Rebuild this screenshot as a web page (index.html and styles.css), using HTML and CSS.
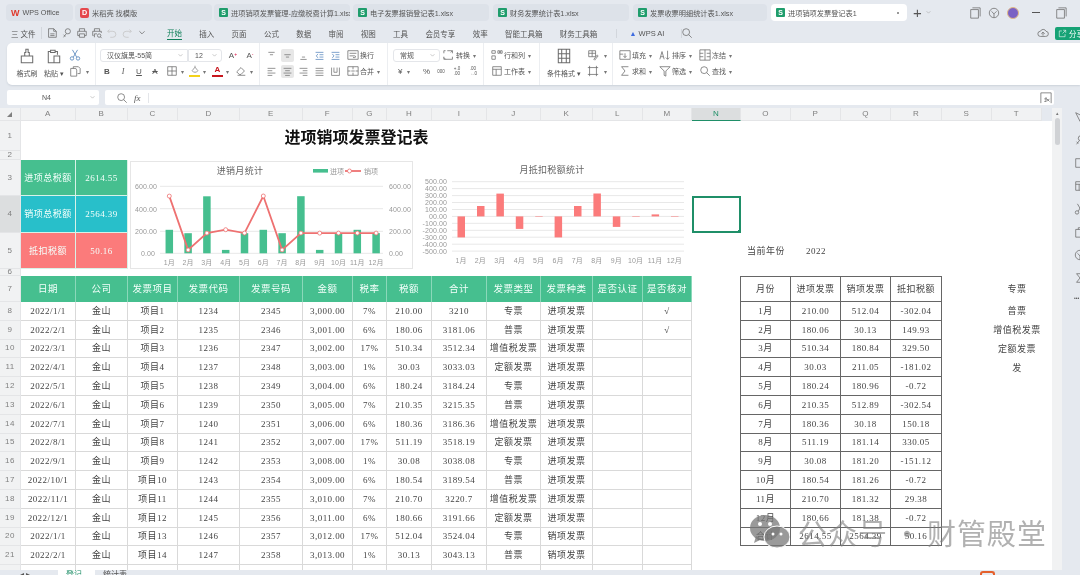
FILE: index.html
```html
<!doctype html>
<html lang="zh-CN">
    <head>
        <meta charset="UTF-8" />
        <title>进项销项发票登记表1</title>
        <link rel="stylesheet" href="styles.css">
    </head>
    <body>
        <svg class="defs" aria-hidden="true">
            <symbol id="i-doc" viewBox="0 0 14 14"><path d="M3 2h6l3 3v7H3zM9 2v3h3M5 8h5M5 10h5"/></symbol>
            <symbol id="i-key" viewBox="0 0 14 14"><circle cx="8" cy="5" r="3"/><path d="M6 8l-3 4M3 9l2 2"/></symbol>
            <symbol id="i-print" viewBox="0 0 14 14"><path d="M4 5V2h6v3M4 10H2V5h10v5h-2M4 8h6v4H4z"/></symbol>
            <symbol id="i-preview" viewBox="0 0 14 14"><path d="M4 5V2h6v3M3 10H2V5h10v2M4 12V8h3"/><circle cx="9.5" cy="10" r="2"/><path d="M11 11.500l1.500 1.500"/></symbol>
            <symbol id="i-undo" viewBox="0 0 14 14"><path d="M4 3L2 5l2 2M2 5h6a3 3 0 0 1 0 7H5"/></symbol>
            <symbol id="i-redo" viewBox="0 0 14 14"><path d="M10 3l2 2-2 2M12 5H6a3 3 0 0 0 0 7h3"/></symbol>
            <symbol id="i-caret" viewBox="0 0 14 14"><path d="M4 5l3 3 3-3"/></symbol>
            <symbol id="i-search" viewBox="0 0 14 14"><circle cx="6" cy="6" r="4"/><path d="M9 9l3.500 3.500"/></symbol>
            <symbol id="i-brush" viewBox="0 0 14 14"><path d="M2 7h10v6H2zM5 7V4h1V1h2v3h1v3"/></symbol>
            <symbol id="i-paste" viewBox="0 0 14 14"><path d="M4 3H2v10h5M10 6V3H8M4 2h4v2H4zM7 7h5v6H7z"/></symbol>
            <symbol id="i-cut" viewBox="0 0 14 14"><circle cx="3.500" cy="11" r="2"/><circle cx="10.500" cy="11" r="2"/><path d="M5 9.500L10 1M9 9.500L4 1"/></symbol>
            <symbol id="i-copy" viewBox="0 0 14 14"><path d="M5 4V2h6l2 2v6h-3M2 4h6l1 2v7H2z"/></symbol>
            <symbol id="i-border" viewBox="0 0 14 14"><path d="M2 2h10v10H2zM7 2v10M2 7h10"/></symbol>
            <symbol id="i-eraser" viewBox="0 0 14 14"><path d="M2 8l5-5 4 4-4 4H5zM3 12h9"/></symbol>
            <symbol id="i-fill" viewBox="0 0 14 14"><path d="M3 8l4-5 4 5-2 2H5zM7 3V1"/></symbol>
            <symbol id="i-top" viewBox="0 0 14 14"><path d="M3 3h8M5 6h4"/></symbol>
            <symbol id="i-mid" viewBox="0 0 14 14"><path d="M3 6h8M5 9h4"/></symbol>
            <symbol id="i-bot" viewBox="0 0 14 14"><path d="M5 9h4M3 12h8"/></symbol>
            <symbol id="i-in" viewBox="0 0 14 14"><path d="M2 3h10M7 6h5M7 9h5M2 12h10M5 5L3 7.500 5 10"/></symbol>
            <symbol id="i-out" viewBox="0 0 14 14"><path d="M2 3h10M7 6h5M7 9h5M2 12h10M3 5l2 2.500L3 10"/></symbol>
            <symbol id="i-wrap" viewBox="0 0 14 14"><path d="M1 2h12v10H1zM3 5h8M3 8h6a1 1 0 0 1 0 2H7"/></symbol>
            <symbol id="i-left" viewBox="0 0 14 14"><path d="M2 3h10M2 6h6M2 9h10M2 12h6"/></symbol>
            <symbol id="i-center" viewBox="0 0 14 14"><path d="M2 3h10M4 6h6M2 9h10M4 12h6"/></symbol>
            <symbol id="i-right" viewBox="0 0 14 14"><path d="M2 3h10M6 6h6M2 9h10M6 12h6"/></symbol>
            <symbol id="i-just" viewBox="0 0 14 14"><path d="M2 3h10M2 6h10M2 9h10M2 12h10"/></symbol>
            <symbol id="i-dist" viewBox="0 0 14 14"><path d="M2 2v10h10V2M5 2v6h4V2"/></symbol>
            <symbol id="i-merge" viewBox="0 0 14 14"><path d="M1 2h12v10H1zM1 7h3M10 7h3M5 7h4M7 2v3M7 9v3"/></symbol>
            <symbol id="i-convert" viewBox="0 0 14 14"><path d="M3 2H1v3M1 9v3h10V9M11 5V2H5M9 4l2-2M3 12l-2-2"/></symbol>
            <symbol id="i-rowcol" viewBox="0 0 14 14"><path d="M1 2h4v3H1zM1 8h4v4H1zM8 2h2v3H8zM11 2h2v3h-2z"/></symbol>
            <symbol id="i-sheet" viewBox="0 0 14 14"><path d="M2 2h10v10H2zM2 5h10M6 5v7"/></symbol>
            <symbol id="i-cond" viewBox="0 0 14 14"><path d="M2 1h10v12H2zM2 5h10M2 9h10M5 1v12M9 1v12"/></symbol>
            <symbol id="i-style" viewBox="0 0 14 14"><path d="M2 2h8v7H2zM2 5h8M6 2v7M8 12l4-5 1 1-4 5z"/></symbol>
            <symbol id="i-frame" viewBox="0 0 14 14"><path d="M3 1v12M11 1v12M1 3h12M1 11h12"/></symbol>
            <symbol id="i-filldown" viewBox="0 0 14 14"><path d="M1 2h12v10H1zM7 5v5M5 8l2 2 2-2M1 6h4"/></symbol>
            <symbol id="i-sort" viewBox="0 0 14 14"><path d="M1 12l2.500-9L6 12M2 9h3M10 2v10M8 10l2 2 2-2"/></symbol>
            <symbol id="i-freeze" viewBox="0 0 14 14"><path d="M1 1h12v12H1zM7 1v12M1 5h4M1 9h4M9 5h4M9 9h4"/></symbol>
            <symbol id="i-sum" viewBox="0 0 14 14"><path d="M11 2H3l4 5-4 5h8"/></symbol>
            <symbol id="i-filter" viewBox="0 0 14 14"><path d="M1 2h12L8 7v6l-2-1V7z"/></symbol>
            <symbol id="i-cloud" viewBox="0 0 14 14"><path d="M4 11a3 3 0 0 1 0-6 3.500 3.500 0 0 1 6.500 0 3 3 0 0 1-.5 6zM7 10V6M5 8l2-2 2 2"/></symbol>
            <symbol id="i-share" viewBox="0 0 14 14"><path d="M6 3H2v9h9V8M8 2h4v4M12 2L7 7"/></symbol>
            <symbol id="i-window" viewBox="0 0 14 14"><path d="M2 3h9v10H2zM4 1h9v10"/></symbol>
            <symbol id="i-compass" viewBox="0 0 14 14"><circle cx="7" cy="7" r="5.500"/><path d="M4 5l3 3 3-3M7 8v4"/></symbol>
            <symbol id="i-fx" viewBox="0 0 14 14"><path d="M1 13V1h12v12M5 11h2V6M5 8h3M8 8l3 3M11 8l-3 3"/></symbol>
            <symbol id="i-cursor" viewBox="0 0 14 14"><path d="M2 2l10 5-4 1-1 4z"/></symbol>
            <symbol id="i-side" viewBox="0 0 14 14"><path d="M2 2h10v10H2z"/></symbol>
        </svg>

        <div class="app">
            <div class="tabs">
                <div class="tab t-wps"><span class="wps">W</span>WPS Office</div>
                <div class="tab t-doc"><span class="pdf">D</span>米稻壳 找模版</div>
                <div class="tab t-a"><span class="s">S</span>进项销项发票管理-应缴税费计算1.xlsx</div>
                <div class="tab t-b"><span class="s">S</span>电子发票报销登记表1.xlsx</div>
                <div class="tab t-c"><span class="s">S</span>财务发票统计表1.xlsx</div>
                <div class="tab t-d"><span class="s">S</span>发票收票明细统计表1.xlsx</div>
                <div class="tab t-on"><span class="s">S</span>进项销项发票登记表1<i class="dot"></i></div>
                <div class="plus">+</div>
                <svg class="ic caret"><use href="#i-caret"/></svg>
                <div class="winbtns">
                    <svg class="ic"><use href="#i-window"/></svg>
                    <svg class="ic"><use href="#i-compass"/></svg>
                    <span class="avatar"></span>
                    <span class="min"></span>
                    <svg class="ic"><use href="#i-window"/></svg>
                </div>
            </div>

            <div class="menu">
                <div class="file">三 文件</div>
                <div class="quick">
                    <svg class="ic"><use href="#i-doc"/></svg>
                    <svg class="ic"><use href="#i-key"/></svg>
                    <svg class="ic"><use href="#i-print"/></svg>
                    <svg class="ic"><use href="#i-preview"/></svg>
                    <svg class="ic faint"><use href="#i-undo"/></svg>
                    <svg class="ic faint"><use href="#i-redo"/></svg>
                    <svg class="ic"><use href="#i-caret"/></svg>
                </div>
                <div class="items">
                    <span class="on">开始</span><span>插入</span><span>页面</span><span>公式</span><span>数据</span><span>审阅</span><span>视图</span><span>工具</span><span>会员专享</span><span>效率</span><span>智能工具箱</span><span>财务工具箱</span>
                    <span class="ai"><b>▲</b> WPS AI</span>
                    <svg class="ic"><use href="#i-search"/></svg>
                </div>
                <div class="share-box">
                    <svg class="ic"><use href="#i-cloud"/></svg>
                    <div class="share"><svg class="ic"><use href="#i-share"/></svg>分享</div>
                </div>
            </div>

            <div class="ribbon">
                <div class="grp g1">
                    <div class="big"><svg class="ic lg"><use href="#i-brush"/></svg>格式刷</div>
                    <div class="big"><svg class="ic lg"><use href="#i-paste"/></svg>粘贴 ▾</div>
                    <div class="rows">
                        <div class="row"><svg class="ic blue"><use href="#i-cut"/></svg></div>
                        <div class="row"><svg class="ic"><use href="#i-copy"/></svg><i class="tri">▾</i></div>
                    </div>
                </div>
                <div class="grp g2">
                    <div class="rows">
                        <div class="row">
                            <div class="select fontname">汉仪旗黑-55简<svg class="ic caret"><use href="#i-caret"/></svg></div>
                            <div class="select fontsize">12<svg class="ic caret"><use href="#i-caret"/></svg></div>
                            <span class="letter lg-a">A<sup>+</sup></span>
                            <span class="letter">A<sup>-</sup></span>
                        </div>
                        <div class="row tight">
                            <span class="letter bold">B</span>
                            <span class="letter ital">I</span>
                            <span class="letter under">U</span>
                            <span class="letter strike">A</span>
                            <span class="tool w21 first"><svg class="ic"><use href="#i-border"/></svg><i class="tri">▾</i></span>
                            <span class="tool w21"><span class="swatch yellow"><svg class="ic"><use href="#i-fill"/></svg></span><i class="tri">▾</i></span>
                            <span class="tool w21"><span class="swatch red">A</span><i class="tri">▾</i></span>
                            <span class="tool w21"><svg class="ic"><use href="#i-eraser"/></svg><i class="tri">▾</i></span>
                        </div>
                    </div>
                </div>
                <div class="grp g3">
                    <div class="rows">
                        <div class="row">
                            <svg class="ic sq"><use href="#i-top"/></svg>
                            <svg class="ic sq act"><use href="#i-mid"/></svg>
                            <svg class="ic sq"><use href="#i-bot"/></svg>
                            <svg class="ic sq blue"><use href="#i-in"/></svg>
                            <svg class="ic sq blue"><use href="#i-out"/></svg>
                            <span class="tool"><svg class="ic"><use href="#i-wrap"/></svg>换行</span>
                        </div>
                        <div class="row">
                            <svg class="ic sq"><use href="#i-left"/></svg>
                            <svg class="ic sq act"><use href="#i-center"/></svg>
                            <svg class="ic sq"><use href="#i-right"/></svg>
                            <svg class="ic sq"><use href="#i-just"/></svg>
                            <svg class="ic sq"><use href="#i-dist"/></svg>
                            <span class="tool"><svg class="ic"><use href="#i-merge"/></svg>合并<i class="tri">▾</i></span>
                        </div>
                    </div>
                </div>
                <div class="grp g4">
                    <div class="rows">
                        <div class="row">
                            <div class="select numfmt">常规<svg class="ic caret"><use href="#i-caret"/></svg></div>
                            <span class="tool"><svg class="ic"><use href="#i-convert"/></svg>转换<i class="tri">▾</i></span>
                        </div>
                        <div class="row num-row">
                            <span class="yen">¥ <i class="tri">▾</i></span><span class="pct">%</span><span class="tiny">000</span><span class="tiny">+.0<br>.00</span><span class="tiny">.00<br>→.0</span>
                        </div>
                    </div>
                </div>
                <div class="grp g5">
                    <div class="rows">
                        <div class="row"><span class="tool"><svg class="ic"><use href="#i-rowcol"/></svg>行和列<i class="tri">▾</i></span></div>
                        <div class="row"><span class="tool"><svg class="ic"><use href="#i-sheet"/></svg>工作表<i class="tri">▾</i></span></div>
                    </div>
                </div>
                <div class="grp g6">
                    <div class="big"><svg class="ic lg"><use href="#i-cond"/></svg>条件格式 ▾</div>
                    <div class="rows">
                        <div class="row"><svg class="ic"><use href="#i-style"/></svg><i class="tri">▾</i></div>
                        <div class="row"><svg class="ic"><use href="#i-frame"/></svg><i class="tri">▾</i></div>
                    </div>
                </div>
                <div class="grp g7">
                    <div class="rows">
                        <div class="row"><span class="tool w40"><svg class="ic"><use href="#i-filldown"/></svg>填充<i class="tri">▾</i></span><span class="tool w40"><svg class="ic"><use href="#i-sort"/></svg>排序<i class="tri">▾</i></span><span class="tool"><svg class="ic"><use href="#i-freeze"/></svg>冻结<i class="tri">▾</i></span></div>
                        <div class="row"><span class="tool w40"><svg class="ic"><use href="#i-sum"/></svg>求和<i class="tri">▾</i></span><span class="tool w40"><svg class="ic"><use href="#i-filter"/></svg>筛选<i class="tri">▾</i></span><span class="tool"><svg class="ic"><use href="#i-search"/></svg>查找<i class="tri">▾</i></span></div>
                    </div>
                </div>
            </div>

            <div class="formula">
                <div class="namebox">N4<svg class="ic caret"><use href="#i-caret"/></svg></div>
                <div class="fbar">
                    <svg class="ic"><use href="#i-search"/></svg>
                    <em>fx</em>
                    <svg class="ic endfx"><use href="#i-fx"/></svg>
                </div>
            </div>

            <div class="work">
                <div class="sheet">
                    <table class="grid">
                        <colgroup>
                            <col class="c21"><col class="c55"><col class="c52"><col class="c50"><col class="c62"><col class="c63"><col class="c50"><col class="c34"><col class="c45"><col class="c55"><col class="c54"><col class="c52"><col class="c50"><col class="c49"><col class="c49"><col class="c50"><col class="c50"><col class="c50"><col class="c51"><col class="c50"><col class="c50"><col class="c10">
                        </colgroup>
                        <tr class="letters"><th class="corner">◢</th><th>A</th><th>B</th><th>C</th><th>D</th><th>E</th><th>F</th><th>G</th><th>H</th><th>I</th><th>J</th><th>K</th><th>L</th><th>M</th><th class="cur">N</th><th>O</th><th>P</th><th>Q</th><th>R</th><th>S</th><th>T</th><th class="blank"></th></tr>
                        <tr class="r1"><th>1</th><td colspan="13" class="title">进项销项发票登记表</td><td colspan="8"></td></tr>
                        <tr class="r2"><th>2</th><td colspan="21"></td></tr>
                        <tr class="r3">
                            <th>3</th><td class="kpi green">进项总税额</td><td class="kpi green">2614.55</td>
                            <td colspan="11" rowspan="3" class="charts">
                                <div class="chart-row">
                                    <svg class="chart-a" viewBox="130 161 283 108">
                                        <rect class="frame" x="130.500" y="161.500" width="282" height="107"/>
                                        <text class="ctitle" x="240" y="174" text-anchor="middle">进销月统计</text>
                                        <rect class="bar-g" x="313" y="169" width="15" height="3.600"/>
                                        <text class="lab" x="330" y="174">进项</text>
                                        <path class="ln" d="M345 171h16"/>
                                        <circle class="pt" cx="349.500" cy="171" r="2"/>
                                        <text class="lab" x="364" y="174">销项</text>
                                        <path class="gl" d="M160 186.300h223M160 208.700h223M160 231.300h223M160 253.300h223"/>
                                        <g class="lab">
                                            <text x="135" y="189">600.00</text><text x="135" y="211.500">400.00</text><text x="135" y="234">200.00</text><text x="141" y="256">0.00</text>
                                            <text x="389" y="189">600.00</text><text x="389" y="211.500">400.00</text><text x="389" y="234">200.00</text><text x="389" y="256">0.00</text>
                                        </g>
                                        <g class="bar-g">
                                            <rect x="165.550" y="229.800" width="7.500" height="23.500"/><rect x="184.350" y="233.200" width="7.500" height="20.100"/><rect x="203.150" y="196.300" width="7.500" height="57"/><rect x="221.950" y="249.900" width="7.500" height="3.400"/><rect x="240.750" y="233.200" width="7.500" height="20.100"/><rect x="259.550" y="229.800" width="7.500" height="23.500"/><rect x="278.350" y="233.200" width="7.500" height="20.100"/><rect x="297.150" y="196.200" width="7.500" height="57.100"/><rect x="315.950" y="249.900" width="7.500" height="3.400"/><rect x="334.750" y="233.100" width="7.500" height="20.200"/><rect x="353.550" y="229.800" width="7.500" height="23.500"/><rect x="372.350" y="233.100" width="7.500" height="20.200"/>
                                        </g>
                                        <path class="ln" d="M169.300 196.100L188.100 249.900 206.900 233.100 225.700 229.700 244.500 233.100 263.300 196 282.100 249.900 300.900 233.100 319.700 233.100 338.500 233.100 357.300 233.100 376.100 233.100"/>
                                        <g class="pt">
                                            <circle cx="169.300" cy="196.100" r="2"/><circle cx="188.100" cy="249.900" r="2"/><circle cx="206.900" cy="233.100" r="2"/><circle cx="225.700" cy="229.700" r="2"/><circle cx="244.500" cy="233.100" r="2"/><circle cx="263.300" cy="196" r="2"/><circle cx="282.100" cy="249.900" r="2"/><circle cx="300.900" cy="233.100" r="2"/><circle cx="319.700" cy="233.100" r="2"/><circle cx="338.500" cy="233.100" r="2"/><circle cx="357.300" cy="233.100" r="2"/><circle cx="376.100" cy="233.100" r="2"/>
                                        </g>
                                        <g class="lab mid">
                                            <text x="169.300" y="265">1月</text><text x="188.100" y="265">2月</text><text x="206.900" y="265">3月</text><text x="225.700" y="265">4月</text><text x="244.500" y="265">5月</text><text x="263.300" y="265">6月</text><text x="282.100" y="265">7月</text><text x="300.900" y="265">8月</text><text x="319.700" y="265">9月</text><text x="338.500" y="265">10月</text><text x="357.300" y="265">11月</text><text x="376.100" y="265">12月</text>
                                        </g>
                                    </svg>
                                    <svg class="chart-b" viewBox="415 161 276 108">
                                        <text class="ctitle" x="552" y="173" text-anchor="middle">月抵扣税额统计</text>
                                        <path class="gl" d="M452 181.700h232M452 188.600h232M452 195.600h232M452 202.500h232M452 209.500h232M452 216.400h232M452 223.300h232M452 230.300h232M452 237.200h232M452 244.200h232M452 251.100h232"/>
                                        <g class="lab end">
                                            <text x="447" y="184">500.00</text><text x="447" y="191">400.00</text><text x="447" y="198">300.00</text><text x="447" y="205">200.00</text><text x="447" y="212">100.00</text><text x="447" y="219">00.00</text><text x="447" y="226">-100.00</text><text x="447" y="233">-200.00</text><text x="447" y="240">-300.00</text><text x="447" y="247">-400.00</text><text x="447" y="254">-500.00</text>
                                        </g>
                                        <g class="bar-r">
                                            <rect x="457.500" y="216.400" width="7.500" height="21"/><rect x="477" y="206" width="7.500" height="10.400"/><rect x="496.400" y="193.600" width="7.500" height="22.800"/><rect x="515.800" y="216.400" width="7.500" height="12.500"/><rect x="535.200" y="216.400" width="7.500" height="0.500"/><rect x="554.600" y="216.400" width="7.500" height="21"/><rect x="574" y="206" width="7.500" height="10.400"/><rect x="593.400" y="193.500" width="7.500" height="22.900"/><rect x="612.800" y="216.400" width="7.500" height="10.500"/><rect x="632.200" y="216.400" width="7.500" height="0.500"/><rect x="651.600" y="214.400" width="7.500" height="2"/><rect x="671" y="216.400" width="7.500" height="0.500"/>
                                        </g>
                                        <g class="lab mid">
                                            <text x="461" y="263">1月</text><text x="480.400" y="263">2月</text><text x="499.800" y="263">3月</text><text x="519.200" y="263">4月</text><text x="538.600" y="263">5月</text><text x="558" y="263">6月</text><text x="577.400" y="263">7月</text><text x="596.800" y="263">8月</text><text x="616.200" y="263">9月</text><text x="635.600" y="263">10月</text><text x="655" y="263">11月</text><text x="674.400" y="263">12月</text>
                                        </g>
                                    </svg>
                                </div>
                            </td>
                            <td colspan="8"></td>
                        </tr>
                        <tr class="r4"><th class="cur-row">4</th><td class="kpi cyan">销项总税额</td><td class="kpi cyan">2564.39</td><td class="sel"></td><td colspan="7"></td></tr>
                        <tr class="r5"><th>5</th><td class="kpi coral">抵扣税额</td><td class="kpi coral">50.16</td><td></td><td>当前年份</td><td>2022</td><td colspan="5"></td></tr>
                        <tr class="r6"><th>6</th><td colspan="21"></td></tr>
                        <tr class="head"><th>7</th><td>日期</td><td>公司</td><td>发票项目</td><td>发票代码</td><td>发票号码</td><td>金额</td><td>税率</td><td>税额</td><td>合计</td><td>发票类型</td><td>发票种类</td><td>是否认证</td><td>是否核对</td><td></td><td>月份</td><td>进项发票</td><td>销项发票</td><td>抵扣税额</td><td></td><td>专票</td><td></td></tr>
                        <tr class="data boxed"><th>8</th><td>2022/1/1</td><td>金山</td><td>项目1</td><td>1234</td><td>2345</td><td>3,000.00</td><td>7%</td><td>210.00</td><td>3210</td><td>专票</td><td>进项发票</td><td></td><td>√</td><td></td><td>1月</td><td>210.00</td><td>512.04</td><td>-302.04</td><td></td><td>普票</td><td></td></tr>
                        <tr class="data boxed"><th>9</th><td>2022/2/1</td><td>金山</td><td>项目2</td><td>1235</td><td>2346</td><td>3,001.00</td><td>6%</td><td>180.06</td><td>3181.06</td><td>普票</td><td>进项发票</td><td></td><td>√</td><td></td><td>2月</td><td>180.06</td><td>30.13</td><td>149.93</td><td></td><td>增值税发票</td><td></td></tr>
                        <tr class="data boxed"><th>10</th><td>2022/3/1</td><td>金山</td><td>项目3</td><td>1236</td><td>2347</td><td>3,002.00</td><td>17%</td><td>510.34</td><td>3512.34</td><td>增值税发票</td><td>进项发票</td><td></td><td></td><td></td><td>3月</td><td>510.34</td><td>180.84</td><td>329.50</td><td></td><td>定额发票</td><td></td></tr>
                        <tr class="data boxed"><th>11</th><td>2022/4/1</td><td>金山</td><td>项目4</td><td>1237</td><td>2348</td><td>3,003.00</td><td>1%</td><td>30.03</td><td>3033.03</td><td>定额发票</td><td>进项发票</td><td></td><td></td><td></td><td>4月</td><td>30.03</td><td>211.05</td><td>-181.02</td><td></td><td>发</td><td></td></tr>
                        <tr class="data boxed"><th>12</th><td>2022/5/1</td><td>金山</td><td>项目5</td><td>1238</td><td>2349</td><td>3,004.00</td><td>6%</td><td>180.24</td><td>3184.24</td><td>专票</td><td>进项发票</td><td></td><td></td><td></td><td>5月</td><td>180.24</td><td>180.96</td><td>-0.72</td><td colspan="3"></td></tr>
                        <tr class="data boxed"><th>13</th><td>2022/6/1</td><td>金山</td><td>项目6</td><td>1239</td><td>2350</td><td>3,005.00</td><td>7%</td><td>210.35</td><td>3215.35</td><td>普票</td><td>进项发票</td><td></td><td></td><td></td><td>6月</td><td>210.35</td><td>512.89</td><td>-302.54</td><td colspan="3"></td></tr>
                        <tr class="data boxed"><th>14</th><td>2022/7/1</td><td>金山</td><td>项目7</td><td>1240</td><td>2351</td><td>3,006.00</td><td>6%</td><td>180.36</td><td>3186.36</td><td>增值税发票</td><td>进项发票</td><td></td><td></td><td></td><td>7月</td><td>180.36</td><td>30.18</td><td>150.18</td><td colspan="3"></td></tr>
                        <tr class="data boxed"><th>15</th><td>2022/8/1</td><td>金山</td><td>项目8</td><td>1241</td><td>2352</td><td>3,007.00</td><td>17%</td><td>511.19</td><td>3518.19</td><td>定额发票</td><td>进项发票</td><td></td><td></td><td></td><td>8月</td><td>511.19</td><td>181.14</td><td>330.05</td><td colspan="3"></td></tr>
                        <tr class="data boxed"><th>16</th><td>2022/9/1</td><td>金山</td><td>项目9</td><td>1242</td><td>2353</td><td>3,008.00</td><td>1%</td><td>30.08</td><td>3038.08</td><td>专票</td><td>进项发票</td><td></td><td></td><td></td><td>9月</td><td>30.08</td><td>181.20</td><td>-151.12</td><td colspan="3"></td></tr>
                        <tr class="data boxed"><th>17</th><td>2022/10/1</td><td>金山</td><td>项目10</td><td>1243</td><td>2354</td><td>3,009.00</td><td>6%</td><td>180.54</td><td>3189.54</td><td>普票</td><td>进项发票</td><td></td><td></td><td></td><td>10月</td><td>180.54</td><td>181.26</td><td>-0.72</td><td colspan="3"></td></tr>
                        <tr class="data boxed"><th>18</th><td>2022/11/1</td><td>金山</td><td>项目11</td><td>1244</td><td>2355</td><td>3,010.00</td><td>7%</td><td>210.70</td><td>3220.7</td><td>增值税发票</td><td>进项发票</td><td></td><td></td><td></td><td>11月</td><td>210.70</td><td>181.32</td><td>29.38</td><td colspan="3"></td></tr>
                        <tr class="data boxed"><th>19</th><td>2022/12/1</td><td>金山</td><td>项目12</td><td>1245</td><td>2356</td><td>3,011.00</td><td>6%</td><td>180.66</td><td>3191.66</td><td>定额发票</td><td>进项发票</td><td></td><td></td><td></td><td>12月</td><td>180.66</td><td>181.38</td><td>-0.72</td><td colspan="3"></td></tr>
                        <tr class="data boxed"><th>20</th><td>2022/1/1</td><td>金山</td><td>项目13</td><td>1246</td><td>2357</td><td>3,012.00</td><td>17%</td><td>512.04</td><td>3524.04</td><td>专票</td><td>销项发票</td><td></td><td></td><td></td><td>合计</td><td>2614.55</td><td>2564.39</td><td>50.16</td><td colspan="3"></td></tr>
                        <tr class="data"><th>21</th><td>2022/2/1</td><td>金山</td><td>项目14</td><td>1247</td><td>2358</td><td>3,013.00</td><td>1%</td><td>30.13</td><td>3043.13</td><td>普票</td><td>销项发票</td><td></td><td></td><td colspan="8"></td></tr>
                        <tr class="data"><th></th><td></td><td></td><td></td><td></td><td></td><td></td><td></td><td></td><td></td><td></td><td></td><td></td><td></td><td colspan="8"></td></tr>
                    </table>

                    <div class="watermark">
                        <svg class="wechat" viewBox="0 0 40 34"><ellipse cx="15" cy="13" rx="15" ry="13"/><path d="M6 21l-2 7 8-4z"/><ellipse class="w2" cx="27" cy="22" rx="13" ry="11"/><circle class="w3" cx="10" cy="9" r="2"/><circle class="w3" cx="20" cy="9" r="2"/><circle class="w3" cx="23" cy="19" r="1.500"/><circle class="w3" cx="31" cy="19" r="1.500"/></svg>
                        <span>公众号 · 财管殿堂</span>
                    </div>
                </div>

                <div class="vscroll"><span class="arrow">▴</span><span class="thumb"></span></div>
                <div class="sidebar">
                    <svg class="ic"><use href="#i-cursor"/></svg>
                    <svg class="ic"><use href="#i-key"/></svg>
                    <svg class="ic"><use href="#i-side"/></svg>
                    <svg class="ic"><use href="#i-sheet"/></svg>
                    <svg class="ic"><use href="#i-cut"/></svg>
                    <svg class="ic"><use href="#i-copy"/></svg>
                    <svg class="ic"><use href="#i-compass"/></svg>
                    <svg class="ic"><use href="#i-sum"/></svg>
                    <span class="more">•••</span>
                </div>
            </div>

            <div class="bottom">
                <span class="sh first-sh">◂ ▸</span>
                <span class="sh on">登记表</span>
                <span class="sh">统计表</span>
                <span class="mark"></span>
            </div>
        </div>
    </body>
</html>
```
FILE: styles.css
```css
* {
    box-sizing: border-box;
}

body {
    margin: 0;
    background: #e5e9ef;
    font-family: "Liberation Sans", "Noto Sans CJK SC", sans-serif;
    font-size: 7px;
    color: #555;
}

.defs {
    display: none;
}

.app {
    width: 1080px;
    height: 575px;
    overflow: hidden;
    display: flex;
    flex-direction: column;
    background: #e5e9ef;
    filter: blur(0.35px);
}

.ic {
    width: 12px;
    height: 12px;
    flex: none;
    fill: none;
    stroke: #6c6c6c;
    stroke-width: 0.9;
    overflow: visible;
}

.ic.lg {
    width: 16px;
    height: 16px;
}

.ic.blue {
    stroke: #4a7db8;
}

.ic.faint {
    stroke: #c4c4c4;
}

.ic.caret {
    width: 9px;
    height: 9px;
    stroke: #a5a5a5;
}

.tri {
    font-style: normal;
    font-size: 6px;
    color: #777;
    margin-left: 2px;
}

/* top tab strip */
.tabs {
    height: 23px;
    display: flex;
    align-items: center;
    gap: 2px;
    padding: 2px 0 0 6px;
}

.tab {
    height: 17px;
    flex: none;
    display: flex;
    align-items: center;
    gap: 3px;
    padding-left: 5px;
    background: #dde2e9;
    border-radius: 4px;
    font-size: 7.2px;
    white-space: nowrap;
    overflow: hidden;
}

.t-wps { width: 67px; }
.t-doc { width: 137px; }
.t-a { width: 136px; }
.t-b { width: 136px; margin-left: 1px; }
.t-c { width: 136px; margin-left: 2px; }
.t-d { width: 134px; margin-left: 2px; }
.t-on { width: 136px; margin-left: 2px; background: #fff; position: relative; }

.s {
    width: 9px;
    height: 9px;
    flex: none;
    border-radius: 1px;
    background: #1f9d6c;
    color: #fff;
    font-size: 7px;
    font-weight: 700;
    line-height: 9px;
    text-align: center;
}

.wps {
    color: #e0392b;
    font-size: 9px;
    font-weight: 700;
}

.pdf {
    width: 9px;
    height: 10px;
    border-radius: 2px;
    background: #e5484d;
    color: #fff;
    font-weight: 700;
    line-height: 10px;
    text-align: center;
}

.dot {
    position: absolute;
    right: 8px;
    top: 8px;
    width: 2px;
    height: 2px;
    border-radius: 50%;
    background: #777;
}

.plus {
    font-size: 15px;
    line-height: 15px;
    margin-left: 4px;
    color: #555;
}

.winbtns {
    margin-left: 34px;
    display: flex;
    align-items: center;
    gap: 7px;
}

.avatar {
    width: 12px;
    height: 12px;
    border-radius: 50%;
    background: #7b62c4;
    border: 1px solid #e2b985;
}

.min {
    width: 8px;
    height: 1px;
    margin: 0 8px 0 6px;
    background: #555;
}

/* menu line */
.menu {
    height: 20px;
    display: flex;
    align-items: center;
    font-size: 7.5px;
}

.file {
    margin-left: 11px;
    width: 30px;
}

.quick {
    width: 126px;
    display: flex;
    gap: 3px;
    padding-left: 4px;
    border-left: 1px solid #d2d6dc;
}

.items {
    display: flex;
    align-items: center;
    gap: 17.3px;
}

.items .on {
    color: #11805a;
    border-bottom: 1px solid #11805a;
    padding-bottom: 1px;
}

.items .ic {
    margin-left: -19px;
}

.ai {
    margin-left: 1px;
    padding: 0 17px 0 13px;
    border-left: 1px solid #d2d6dc;
    border-right: 1px solid #d2d6dc;
}

.ai b {
    color: #3d6be0;
    font-size: 7px;
}

.share-box {
    margin-left: auto;
    display: flex;
    align-items: center;
    gap: 6px;
}

.share {
    width: 25px;
    height: 13px;
    display: flex;
    align-items: center;
    gap: 2px;
    padding-left: 3px;
    background: #16a275;
    color: #fff;
    border-radius: 2px 0 0 2px;
    white-space: nowrap;
    overflow: hidden;
}

.share .ic {
    stroke: #fff;
    width: 9px;
    height: 9px;
}

/* ribbon */
.ribbon {
    height: 42px;
    margin-left: 7px;
    display: flex;
    background: #fff;
    border-radius: 5px 0 0 5px;
    box-shadow: 0 1px 2px #ccd2da;
}

.grp {
    flex: none;
    display: flex;
    padding: 4px 0 6px;
    border-right: 1px solid #eceef1;
}

.g1 { width: 89px; padding-left: 8px; gap: 3px; }
.g2 { width: 164px; padding-left: 4px; }
.g3 { width: 128px; padding-left: 5px; }
.g4 { width: 96px; padding-left: 5px; }
.g5 { width: 56px; padding-left: 7px; }
.g6 { width: 73px; padding-left: 10px; gap: 9px; }
.g7 { flex: 1; border: 0; padding-left: 6px; }

.rows {
    display: flex;
    flex-direction: column;
}

.row {
    height: 16px;
    display: flex;
    align-items: center;
    gap: 3px;
}

.row.tight {
    gap: 2px;
}

.g7 .row {
    gap: 0;
}

.big {
    width: 24px;
    display: flex;
    flex-direction: column;
    align-items: center;
    justify-content: space-between;
    white-space: nowrap;
    padding: 1px 0;
}

.g6 .big {
    width: 28px;
}

.select {
    height: 13px;
    display: flex;
    align-items: center;
    justify-content: space-between;
    padding: 0 2px 0 6px;
    border: 1px solid #e4e6ea;
}

.fontname {
    width: 88px;
    border-radius: 3px 0 0 3px;
}

.fontsize {
    width: 34px;
    margin-left: -3px;
    border-radius: 0 3px 3px 0;
}

.numfmt {
    width: 47px;
    border-radius: 3px;
}

.letter {
    width: 14px;
    text-align: center;
    font-size: 8px;
}

.letter sup {
    font-size: 5px;
    color: #d14;
    vertical-align: 2px;
    line-height: 0;
}

.lg-a {
    margin-left: 1px;
}

.bold { font-weight: 700; }
.ital { font-style: italic; font-family: "Liberation Serif", serif; }
.under { text-decoration: underline; }
.strike { text-decoration: line-through; }

.tool {
    display: inline-flex;
    align-items: center;
    gap: 1px;
    white-space: nowrap;
}

.g3 .tool {
    margin-left: 2px;
}

.w21 {
    width: 21px;
}

.w40 {
    width: 40px;
}

.first {
    margin-left: 2px;
}

.swatch {
    width: 11px;
    height: 12px;
    text-align: center;
    font-weight: 700;
    font-size: 8px;
    line-height: 10px;
    border-bottom: 2px solid;
    display: block;
}

.swatch .ic {
    width: 10px;
    height: 10px;
}

.yellow { border-color: #f3d21a; }
.red { border-color: #c8161d; color: #c8161d; }

.ic.sq {
    width: 13px;
    height: 13px;
    padding: 1px;
    border-radius: 2px;
}

.ic.act {
    background: #e7e7e7;
}

.num-row {
    gap: 0;
    font-size: 8px;
    padding-left: 5px;
}

.yen {
    width: 25px;
}

.pct {
    width: 10px;
}

.tiny {
    width: 16px;
    font-size: 4.5px;
    line-height: 5px;
    text-align: center;
}

/* name box and formula line */
.formula {
    height: 15px;
    margin: 5px 26px 0 7px;
    display: flex;
    gap: 6px;
}

.namebox {
    width: 92px;
    display: flex;
    align-items: center;
    justify-content: space-between;
    padding: 0 2px 0 35px;
    background: #fff;
    border-radius: 2px;
}

.fbar {
    flex: 1;
    display: flex;
    align-items: center;
    gap: 6px;
    padding-left: 11px;
    background: #fff;
    border-radius: 2px;
}

.fbar em {
    font-family: "Liberation Serif", serif;
    font-size: 9px;
    padding-right: 7px;
    border-right: 1px solid #e4e6ea;
}

.endfx {
    margin-left: auto;
    margin-right: 2px;
}

/* sheet area */
.work {
    height: 462px;
    margin-top: 3px;
    display: flex;
}

.sheet {
    width: 1052px;
    position: relative;
    overflow: hidden;
    background: #fff;
}

.grid {
    table-layout: fixed;
    width: 1052px;
    border-collapse: separate;
    border-spacing: 0;
    font-family: "Liberation Serif", "Noto Sans CJK SC", serif;
    font-size: 9px;
    letter-spacing: 0.45px;
    color: #444;
}

.c21 { width: 21px; }
.c55 { width: 55px; }
.c52 { width: 52px; }
.c50 { width: 50px; }
.c62 { width: 62px; }
.c63 { width: 63px; }
.c34 { width: 34px; }
.c45 { width: 45px; }
.c54 { width: 54px; }
.c49 { width: 49px; }
.c51 { width: 51px; }
.c10 { width: 10px; }

.grid td,
.grid th {
    padding: 0;
    text-align: center;
    white-space: nowrap;
    overflow: hidden;
    line-height: 1;
}

.grid td {
    padding-top: 1px;
}

.grid th {
    background: #f1f2f3;
    border-right: 1px solid #e4e5e7;
    border-bottom: 1px solid #e4e5e7;
    font: 8px/1 "Liberation Sans", sans-serif;
    color: #808080;
}

.letters {
    height: 13px;
}

.letters th.cur,
.grid th.cur-row {
    background: #dcdedf;
}

.letters th.cur {
    color: #1f8f68;
    border-bottom: 1px solid #1f8f68;
}

.letters th.blank {
    background: #e5e9ef;
    border: 0;
}

.grid th.corner {
    font-size: 5px;
}

.r1 { height: 30px; }
.r2 { height: 9px; }
.r3 { height: 36px; }
.r4 { height: 37px; }
.r5 { height: 36px; }
.r6 { height: 7px; }
.head { height: 26px; }
.data { height: 18.8px; }

.grid .r6 th {
    line-height: 6px;
}

.grid .title {
    padding-top: 0;
    font: 700 16px/1 "Noto Sans CJK SC", sans-serif;
    color: #111;
    letter-spacing: 0;
}

.kpi {
    color: #f4fffb;
    border-right: 1px solid #d8f2e8;
    border-bottom: 1px solid #d8f2e8;
}

.grid .green { background: #46bf8f; }
.grid .cyan { background: #28bfca; }
.grid .coral { background: #fb7b7b; }

.grid .charts {
    padding-top: 0;
    vertical-align: top;
    overflow: visible;
}

.chart-row {
    display: flex;
    gap: 2px;
    padding: 1px 0 0 2px;
    height: 109px;
}

.chart-a {
    width: 283px;
    height: 108px;
}

.chart-b {
    width: 276px;
    height: 108px;
}

.frame {
    fill: #fff;
    stroke: #e6e6e6;
}

.ctitle {
    font: 9px "Noto Sans CJK SC", sans-serif;
    fill: #666;
    letter-spacing: 0.3px;
}

.lab {
    font: 7px "Liberation Sans", "Noto Sans CJK SC", sans-serif;
    letter-spacing: 0.1px;
    fill: #999;
}

.lab.end {
    text-anchor: end;
}

.lab.mid {
    text-anchor: middle;
}

.gl {
    stroke: #e8e8e8;
    fill: none;
    stroke-width: 1;
}

.bar-g {
    fill: #46bf8f;
}

.bar-r {
    fill: #fb7b7b;
}

.ln {
    fill: none;
    stroke: #ee7171;
    stroke-width: 1.8;
}

.pt {
    fill: #fff;
    stroke: #ee7171;
    stroke-width: 0.8;
}

.sel {
    border: 2px solid #1f8f68;
    position: relative;
}

.sel::after {
    content: "";
    position: absolute;
    right: -2px;
    bottom: -2px;
    width: 3px;
    height: 3px;
    background: #1f8f68;
}

/* main table */
.head td:nth-of-type(-n+13) {
    background: #46bf8f;
    color: #f4fffb;
    font-size: 9.5px;
    border-right: 1px solid #8bd8ba;
}

.data td:nth-of-type(-n+13) {
    border-right: 1px solid #d9d9d9;
    border-bottom: 1px solid #d9d9d9;
}

/* month table on the right */
.head td:nth-of-type(n+15):nth-of-type(-n+18),
.boxed td:nth-of-type(n+15):nth-of-type(-n+18) {
    border-right: 1px solid #666;
    border-bottom: 1px solid #666;
}

.head td:nth-of-type(n+15):nth-of-type(-n+18) {
    border-top: 1px solid #666;
}

.head td:nth-of-type(14),
.boxed td:nth-of-type(14) {
    border-right: 1px solid #666;
}

.watermark {
    position: absolute;
    left: 750px;
    top: 403px;
    display: flex;
    align-items: center;
    gap: 8px;
    color: rgba(125, 125, 125, 0.6);
    font: 29px "Noto Sans CJK SC", sans-serif;
    letter-spacing: 1px;
    word-spacing: -3px;
    white-space: nowrap;
    pointer-events: none;
}

.wechat {
    width: 40px;
    height: 34px;
    fill: rgba(120, 120, 120, 0.75);
}

.wechat .w2 {
    stroke: #fff;
    stroke-width: 1;
}

.wechat .w3 {
    fill: #fff;
}

.vscroll {
    width: 10px;
    padding-top: 2px;
    display: flex;
    flex-direction: column;
    align-items: center;
    background: #f1f2f3;
    font-size: 5px;
    color: #777;
}

.thumb {
    width: 5px;
    height: 27px;
    margin-top: 2px;
    border-radius: 3px;
    background: #d0d2d5;
}

.sidebar {
    flex: 1;
    display: flex;
    flex-direction: column;
    gap: 11px;
    padding: 3px 0 0 12px;
    overflow: hidden;
}

.more {
    font-size: 5px;
    white-space: nowrap;
}

.bottom {
    height: 5px;
    display: flex;
    font-size: 8px;
    line-height: 8px;
    padding-left: 20px;
    position: relative;
    overflow: hidden;
}

.sh {
    padding: 1px 8px 0;
}

.first-sh {
    width: 38px;
    padding: 1px 0 0;
}

.sh.on {
    width: 37px;
    background: #fff;
    color: #1f8f68;
}

.mark {
    position: absolute;
    left: 980px;
    top: 1px;
    width: 15px;
    height: 10px;
    border-top: 2px solid #e4602c;
    border-left: 2px solid #e4602c;
    border-right: 2px solid #e4602c;
    border-radius: 3px;
}
```
